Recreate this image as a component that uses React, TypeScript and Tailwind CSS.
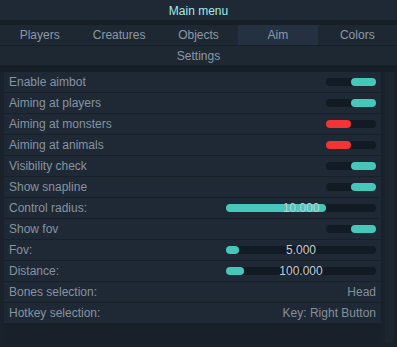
import React from "react";

type Row =
  | { label: string; kind: "toggle"; on: boolean }
  | { label: string; kind: "slider"; fill: number; value: string }
  | { label: string; kind: "text"; value: string };

const rows: Row[] = [
  { label: "Enable aimbot", kind: "toggle", on: true },
  { label: "Aiming at players", kind: "toggle", on: true },
  { label: "Aiming at monsters", kind: "toggle", on: false },
  { label: "Aiming at animals", kind: "toggle", on: false },
  { label: "Visibility check", kind: "toggle", on: true },
  { label: "Show snapline", kind: "toggle", on: true },
  { label: "Control radius:", kind: "slider", fill: 100, value: "10.000" },
  { label: "Show fov", kind: "toggle", on: true },
  { label: "Fov:", kind: "slider", fill: 13, value: "5.000" },
  { label: "Distance:", kind: "slider", fill: 18, value: "100.000" },
  { label: "Bones selection:", kind: "text", value: "Head" },
  { label: "Hotkey selection:", kind: "text", value: "Key: Right Button" },
];

const tabs = ["Players", "Creatures", "Objects", "Aim", "Colors"];

function Toggle({ on }: { on: boolean }) {
  return (
    <div className={`flex w-[50px] h-[8px] rounded-[4px] bg-[#121a23] ${on ? "justify-end" : "justify-start"}`}>
      <div className={`w-[25px] h-[8px] rounded-[4px] ${on ? "bg-[#45c8ba]" : "bg-[#f23434]"}`} />
    </div>
  );
}

function Slider({ fill, value }: { fill: number; value: string }) {
  return (
    <div className="relative w-[150px] h-[8px] rounded-[4px] bg-[#121a23]">
      <div className="h-[8px] rounded-[4px] bg-[#45c8ba]" style={{ width: fill }} />
      <span className="absolute inset-0 flex items-center justify-center text-[12px] leading-none text-[#c3ccd4]">
        {value}
      </span>
    </div>
  );
}

export default function App() {
  return (
    <div className="w-[397px] h-[347px] overflow-hidden bg-[#19212b] font-['Liberation_Sans',Arial,sans-serif] text-[12px]">
      {/* Title bar */}
      <div className="h-[20px] pt-[2px] flex items-center justify-center bg-[#1f2935] text-[#a6eae6]">Main menu</div>
      <div className="h-[5px] bg-[#161e27]" />

      {/* Tabs */}
      <div className="grid grid-cols-5 h-[20px] bg-[#1e2833] text-[#8b99a7]">
        {tabs.map((t) => (
          <div key={t} className={`flex items-center justify-center ${t === "Aim" ? "bg-[#243140]" : ""}`}>
            {t}
          </div>
        ))}
      </div>
      <div className="h-[1px] bg-[#17202a]" />
      <div className="h-[19px] flex items-center justify-center bg-[#1e2833] text-[#8b99a7]">Settings</div>
      <div className="h-[7px] bg-[#161e27]" />

      {/* Content */}
      <div className="flex pl-[4px] gap-[4px]">
        <div className="w-[377px] flex flex-col gap-[1px] bg-[#18202a]">
          {rows.map((r) => (
            <div key={r.label} className="h-[20px] flex items-center justify-between pl-[5px] pr-[5px] bg-[#1f2935] text-[#8693a0]">
              <span>{r.label}</span>
              {r.kind === "toggle" && <Toggle on={r.on} />}
              {r.kind === "slider" && <Slider fill={r.fill} value={r.value} />}
              {r.kind === "text" && <span className="text-[#858f99]">{r.value}</span>}
            </div>
          ))}
        </div>
        <div className="w-[9px] h-[271px] rounded-b-[4px] bg-[#1c2530]" />
      </div>
    </div>
  );
}
